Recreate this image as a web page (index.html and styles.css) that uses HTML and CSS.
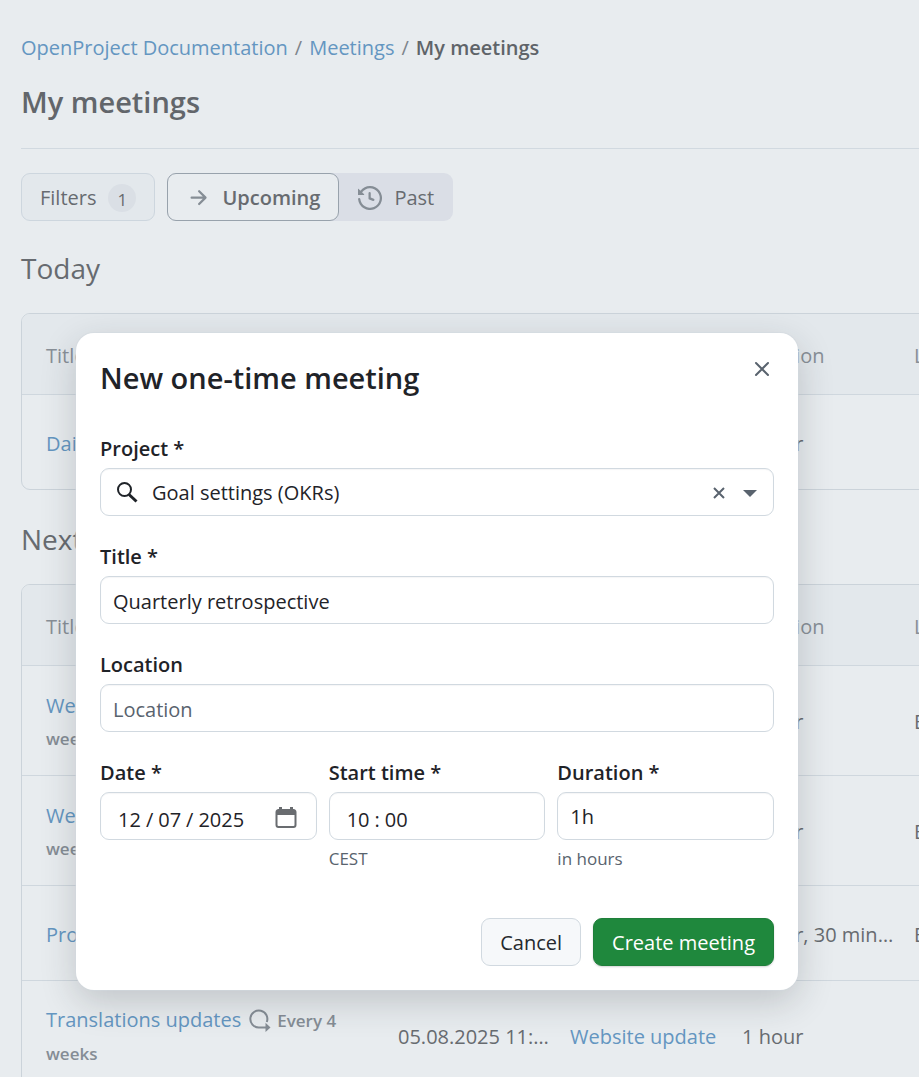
FILE: index.html
```html
<!DOCTYPE html>
<html lang="en">
<head>
<meta charset="utf-8">
<title>My meetings</title>
<link rel="stylesheet" href="styles.css">
</head>
<body>
<main class="page">
  <nav class="breadcrumb" aria-label="Breadcrumb">
    <a href="#">OpenProject Documentation</a><span class="sep">/</span><a href="#">Meetings</a><span class="sep">/</span><strong>My meetings</strong>
  </nav>
  <h1 class="page-title">My meetings</h1>
  <div class="toolbar">
    <button class="filter-button" type="button">Filters <span class="counter">1</span></button>
    <div class="segmented">
      <button class="segment segment-active" type="button">
        <svg class="icon-arrow" viewBox="0 0 16 16" aria-hidden="true"><path d="M8.22 2.97a.75.75 0 0 1 1.06 0l4.25 4.25a.75.75 0 0 1 0 1.06l-4.25 4.25a.751.751 0 0 1-1.042-.018.751.751 0 0 1-.018-1.042l2.97-2.97H3.75a.75.75 0 0 1 0-1.5h7.44L8.22 4.03a.75.75 0 0 1 0-1.06Z"/></svg>
        Upcoming
      </button>
      <button class="segment" type="button">
        <svg class="icon-history" viewBox="0 0 16 16" aria-hidden="true"><path d="m.427 1.927 1.215 1.215a8.002 8.002 0 1 1-1.6 5.685.75.75 0 1 1 1.493-.154 6.5 6.5 0 1 0 1.18-4.458l1.358 1.358A.25.25 0 0 1 3.896 6H.25A.25.25 0 0 1 0 5.75V2.104a.25.25 0 0 1 .427-.177ZM7.75 4a.75.75 0 0 1 .75.75v2.992l2.028.812a.75.75 0 0 1-.557 1.392l-2.5-1A.751.751 0 0 1 7 8.25v-3.5A.75.75 0 0 1 7.75 4Z"/></svg>
        Past
      </button>
    </div>
  </div>

  <h2 class="section-title">Today</h2>
  <div class="table-box">
    <table class="meetings">
      <colgroup><col class="col-title"><col class="col-data"><col class="col-data"><col class="col-data"><col class="col-data"></colgroup>
      <thead><tr><th>Title</th><th></th><th></th><th>Duration</th><th>Location</th></tr></thead>
      <tbody>
        <tr class="row-single"><td><a href="#">Daily</a></td><td></td><td></td><td>1 hour</td><td></td></tr>
      </tbody>
    </table>
  </div>

  <h2 class="section-title">Next 7 days</h2>
  <div class="table-box">
    <table class="meetings">
      <colgroup><col class="col-title"><col class="col-data"><col class="col-data"><col class="col-data"><col class="col-data"></colgroup>
      <thead><tr><th>Title</th><th></th><th></th><th>Duration</th><th>Location</th></tr></thead>
      <tbody>
        <tr class="row-double"><td><a href="#">Weekly</a><br><span class="repeat">weeks</span></td><td></td><td></td><td>1 hour</td><td>E</td></tr>
        <tr class="row-double"><td><a href="#">Weekly</a><br><span class="repeat">weeks</span></td><td></td><td></td><td>1 hour</td><td>E</td></tr>
        <tr class="row-single"><td><a href="#">Project</a></td><td></td><td></td><td>1 hour, 30 minutes</td><td>E</td></tr>
        <tr class="row-double">
          <td><a href="#">Translations updates</a><svg class="icon-repeat" viewBox="0 0 22 24" aria-hidden="true"><path class="loop" d="M17.800 13A8.500 8.500 0 1 0 9.700 18.500H17"/><path class="head" d="M16.500 13.800v9.200l5-4.600z"/></svg><span class="repeat">Every 4<br>weeks</span></td>
          <td>05.08.2025 11:00 AM</td><td><a href="#">Website update</a></td><td>1 hour</td><td></td>
        </tr>
      </tbody>
    </table>
  </div>
</main>

<div class="overlay">
  <form class="dialog" role="dialog" aria-labelledby="dialog-title">
    <header class="dialog-header">
      <h2 class="dialog-title" id="dialog-title">New one-time meeting</h2>
      <button class="icon-button" type="button" aria-label="Close">
        <svg class="icon-close" viewBox="0 0 16 16" aria-hidden="true"><path d="M2 2l12 12M14 2L2 14"/></svg>
      </button>
    </header>
    <div class="field">
      <label for="project">Project *</label>
      <div class="control combo">
        <svg class="icon-search" viewBox="0 0 22 22" aria-hidden="true"><circle cx="8.500" cy="7.500" r="6.500"/><path class="handle" d="M13 12.500l7.500 7"/></svg>
        <input id="project" type="text" value="Goal settings (OKRs)">
        <button class="icon-button" type="button" aria-label="Clear"><svg class="icon-clear" viewBox="0 0 12 12" aria-hidden="true"><path d="M1 1l10 10M11 1L1 11"/></svg></button>
        <button class="icon-button" type="button" aria-label="Open list"><svg class="icon-caret" viewBox="0 0 14 7" aria-hidden="true"><path d="M0 0h14L7 7z"/></svg></button>
      </div>
    </div>
    <div class="field">
      <label for="title">Title *</label>
      <input class="control" id="title" type="text" value="Quarterly retrospective">
    </div>
    <div class="field">
      <label for="location">Location</label>
      <input class="control" id="location" type="text" placeholder="Location">
    </div>
    <div class="field-row">
      <div class="field">
        <label for="date">Date *</label>
        <div class="control picker">
          <input id="date" type="date" value="2025-12-07">
          <svg class="icon-calendar" viewBox="0 0 22 22" aria-hidden="true"><path d="M4 0h3v2h8V0h3v2a3 3 0 0 1 3.500 3v13a3 3 0 0 1-3 3H3.500a3 3 0 0 1-3-3V5A3 3 0 0 1 4 2zM2.500 8v10a1 1 0 0 0 1 1h15a1 1 0 0 0 1-1V8z" fill-rule="evenodd"/></svg>
        </div>
      </div>
      <div class="field">
        <label for="time">Start time *</label>
        <div class="control picker"><input id="time" type="time" value="10:00"></div>
        <span class="hint">CEST</span>
      </div>
      <div class="field">
        <label for="duration">Duration *</label>
        <input class="control control-plain" id="duration" type="text" value="1h">
        <span class="hint">in hours</span>
      </div>
    </div>
    <footer class="dialog-footer">
      <button class="button" type="button">Cancel</button>
      <button class="button button-primary" type="submit">Create meeting</button>
    </footer>
  </form>
</div>
</body>
</html>
```

FILE: styles.css
```css
* { box-sizing: border-box; }

body {
  margin: 0;
  min-height: 100vh;
  overflow: hidden;
  background: #e8ecef;
  color: #676b70;
  font: 20px/32px "Open Sans", "Noto Sans", sans-serif;
}

button, input { font: inherit; color: inherit; margin: 0; }
a { color: #6496c1; text-decoration: none; }
h1, h2 { margin: 0; }
svg { display: block; flex: none; fill: currentColor; }

.page { height: 100vh; padding: 32px 0 0 21px; overflow: hidden; }
.breadcrumb { white-space: nowrap; }
.breadcrumb strong { color: #5f6469; font-weight: 600; }
.sep { margin: 0 7px; color: #7e858c; }
.page-title {
  padding: 18px 0 26px;
  border-bottom: 1px solid #d1d9e0;
  font-size: 29px;
  line-height: 40px;
  font-weight: 600;
  color: #62666b;
}

.toolbar { display: flex; gap: 12px; margin: 24px 0 27px; }
.filter-button, .segment {
  display: flex;
  align-items: center;
  gap: 12px;
  height: 48px;
  padding: 2px 18px 0;
  border: 1px solid #cdd6de;
  border-radius: 9px;
  background: #e3e8ec;
}
.counter {
  display: grid;
  place-items: center;
  width: 28px;
  height: 28px;
  border-radius: 50%;
  background: #dadfe5;
  font-size: 17px;
}
.segmented { display: flex; border-radius: 9px; background: #dadee6; }
.segment { border-color: transparent; background: transparent; }
.segment-active { border-color: #98a2ac; background: #e8ecef; font-weight: 600; }
.icon-arrow, .icon-history { width: 24px; height: 24px; color: #858d95; }

.section-title { font-size: 28px; line-height: 40px; font-weight: 400; }
.table-box {
  width: 1054px;
  margin: 25px 0 29px;
  border: 1px solid #cbd3da;
  border-radius: 9px;
  overflow: hidden;
}
.meetings { width: 100%; table-layout: fixed; border-collapse: collapse; }
.col-title { width: 364px; }
.col-data { width: 172px; }
.meetings th, .meetings td {
  padding: 4px 6px 0 12px;
  text-align: left;
  white-space: nowrap;
  overflow: hidden;
  text-overflow: ellipsis;
}
.meetings th:first-child, .meetings td:first-child { padding-left: 24px; }
.meetings th { height: 80px; background: #e3e8ec; color: #888f97; font-weight: 400; }
.meetings tbody tr { border-top: 1px solid #cfd7de; }
.row-single { height: 95px; }
.row-double { height: 110px; }
.repeat { color: #858d95; font-size: 17px; font-weight: 600; }
.icon-repeat { display: inline-block; width: 22px; height: 24px; margin: 0 6px 0 8px; vertical-align: -6px; color: #858d95; }
.icon-repeat .loop { fill: none; stroke: currentColor; stroke-width: 2; }

.overlay { position: absolute; inset: 0; padding: 333px 121px 0 76px; overflow: hidden; }
.dialog {
  padding: 24px 24px;
  border-radius: 18px;
  background: #fff;
  color: #1f2328;
  box-shadow: 0 0 0 1px #d1d9e080, 0 12px 36px #25292e33;
}
.dialog-header { display: flex; justify-content: space-between; align-items: flex-start; margin-bottom: 33px; }
.dialog-title { font-size: 29px; line-height: 42px; font-weight: 600; }
.icon-button { display: grid; place-items: center; width: 24px; height: 24px; padding: 0; border: 0; background: none; color: #59636e; }
.icon-close { width: 16px; height: 16px; fill: none; stroke: currentColor; stroke-width: 2; stroke-linecap: round; }
.icon-clear { width: 12px; height: 12px; fill: none; stroke: currentColor; stroke-width: 2; }
.icon-caret { width: 14px; height: 7px; }
.icon-search { width: 22px; height: 22px; fill: none; stroke: currentColor; stroke-width: 2; }
.icon-search .handle { stroke-width: 3; }
.icon-calendar { width: 22px; height: 22px; color: #696c70; }

.field { display: flex; flex-direction: column; flex: 1; min-width: 0; margin-bottom: 24px; }
.field label { height: 36px; padding-top: 1px; font-weight: 600; }
.control {
  width: 100%;
  height: 48px;
  padding: 2px 12px 0;
  border: 1px solid #d1d9e0;
  border-radius: 9px;
  background: #fff;
  box-shadow: inset 0 1px 1px #1f23280a;
}
.control-plain { padding-top: 0; }
.control::placeholder { color: #59636e; opacity: 1; }
.combo, .picker { display: flex; align-items: center; }
.combo { gap: 7px; padding: 2px 11px 0 15px; }
.combo input, .picker input { flex: 1; min-width: 0; padding: 0; border: 0; background: none; outline: 0; }
.combo input { padding-left: 7px; }
.picker { padding: 4px 19px 0 16px; }
.picker input { padding-top: 4px; }
.picker input::-webkit-datetime-edit-text { padding: 0 4px; }
.picker input::-webkit-datetime-edit-ampm-field { display: none; }
.picker input::-webkit-calendar-picker-indicator { display: none; }
.field-row { display: flex; gap: 12px; }
.hint { margin-top: 3px; color: #59636e; font-size: 17px; }

.dialog-footer { display: flex; justify-content: flex-end; gap: 12px; margin-top: 19px; }
.button { height: 48px; padding: 2px 18px 0; border: 1px solid #d1d9e0; border-radius: 9px; background: #f6f8fa; color: #25292e; }
.button-primary { border-color: #1f7f3a; background: #1f883d; color: #fff; box-shadow: 0 1px 2px #1f232833; }
```
